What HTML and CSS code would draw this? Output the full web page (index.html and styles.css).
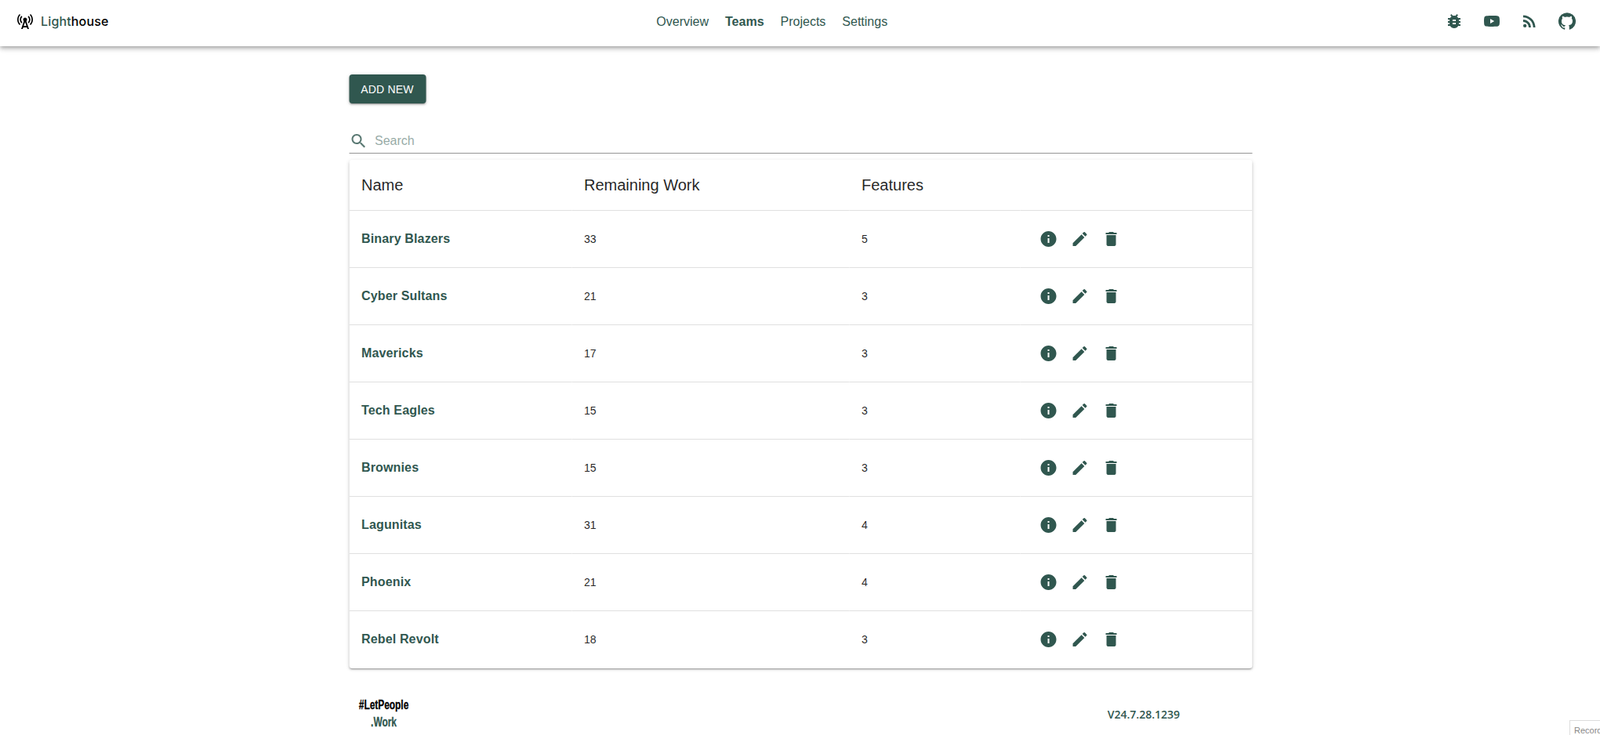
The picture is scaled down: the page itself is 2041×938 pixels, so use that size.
FILE: index.html
```html
<!DOCTYPE html>
<html lang="en">
<head>
    <meta charset="UTF-8">
    <meta name="viewport" content="width=device-width, initial-scale=1.0">
    <title>Lighthouse</title>
    <link rel="stylesheet" href="styles.css">
</head>
<body>
    <svg class="iconDefs" xmlns="http://www.w3.org/2000/svg">
        <symbol id="iconInfo" viewBox="0 0 24 24"><path d="M12 2C6.48 2 2 6.48 2 12s4.48 10 10 10 10-4.48 10-10S17.52 2 12 2m1 15h-2v-6h2zm0-8h-2V7h2z"/></symbol>
        <symbol id="iconEdit" viewBox="0 0 24 24"><path d="M3 17.25V21h3.75L17.81 9.94l-3.75-3.75zM20.71 7.04c.39-.39.39-1.02 0-1.41l-2.34-2.34a.9959.9959 0 0 0-1.41 0l-1.83 1.83 3.75 3.75z"/></symbol>
        <symbol id="iconDelete" viewBox="0 0 24 24"><path d="M6 19c0 1.1.9 2 2 2h8c1.1 0 2-.9 2-2V7H6zM19 4h-3.5l-1-1h-5l-1 1H5v2h14z"/></symbol>
    </svg>

    <header class="topBar">
        <a class="brand">
            <svg class="icon" viewBox="0 0 24 24"><path d="M7.3 14.7l1.2-1.2c-1-1-1.5-2.3-1.5-3.5 0-1.3.5-2.6 1.5-3.5L7.3 5.3c-1.3 1.3-2 3-2 4.7s.7 3.4 2 4.7zM19.1 2.9l-1.2 1.2c1.6 1.6 2.4 3.8 2.4 5.9 0 2.1-.8 4.3-2.4 5.9l1.2 1.2c2-2 2.9-4.5 2.9-7.1 0-2.6-1-5.1-2.9-7.1zM6.1 4.1 4.9 2.9C3 4.9 2 7.4 2 10c0 2.6 1 5.1 2.9 7.1l1.2-1.2c-1.6-1.6-2.4-3.8-2.4-5.9 0-2.1.8-4.3 2.4-5.9zm10.6 10.6c1.3-1.3 2-3 2-4.7-.1-1.7-.7-3.4-2-4.7l-1.2 1.2c1 1 1.5 2.3 1.5 3.5 0 1.3-.5 2.6-1.5 3.5l1.2 1.2zM14.5 10c0-1.38-1.12-2.5-2.5-2.5S9.5 8.62 9.5 10c0 .76.34 1.42.87 1.88L7 22h2l.67-2h4.67l.66 2h2l-3.37-10.12c.53-.46.87-1.12.87-1.88zm-4.17 8L12 13l1.67 5h-3.34z"/></svg>
            <span class="brandName"><span class="brandLight">Light</span>house</span>
        </a>
        <nav class="mainNav">
            <a>Overview</a>
            <a class="active">Teams</a>
            <a>Projects</a>
            <a>Settings</a>
        </nav>
        <div class="topIcons">
            <svg class="icon" viewBox="0 0 24 24"><path d="M20 8h-2.81c-.45-.78-1.07-1.45-1.82-1.96L17 4.41 15.59 3l-2.17 2.17C12.96 5.06 12.49 5 12 5s-.96.06-1.41.17L8.41 3 7 4.41l1.62 1.63C7.88 6.55 7.26 7.22 6.81 8H4v2h2.09c-.05.33-.09.66-.09 1v1H4v2h2v1c0 .34.04.67.09 1H4v2h2.81c1.04 1.79 2.97 3 5.19 3s4.15-1.21 5.19-3H20v-2h-2.09c.05-.33.09-.66.09-1v-1h2v-2h-2v-1c0-.34-.04-.67-.09-1H20zm-6 8h-4v-2h4zm0-4h-4v-2h4z"/></svg>
            <svg class="icon" viewBox="0 0 24 24"><path d="M10 15l5.19-3L10 9v6m11.56-7.83c.13.47.22 1.1.28 1.9.07.8.1 1.49.1 2.09L22 12c0 2.19-.16 3.8-.44 4.83-.25.9-.83 1.48-1.73 1.73-.47.13-1.33.22-2.65.28-1.3.07-2.49.1-3.59.1L12 19c-4.19 0-6.8-.16-7.83-.44-.9-.25-1.48-.83-1.73-1.73-.13-.47-.22-1.1-.28-1.9-.07-.8-.1-1.49-.1-2.09L2 12c0-2.19.16-3.8.44-4.83.25-.9.83-1.48 1.73-1.73.47-.13 1.33-.22 2.65-.28 1.3-.07 2.49-.1 3.59-.1L12 5c4.19 0 6.8.16 7.83.44.9.25 1.48.83 1.73 1.73z"/></svg>
            <svg class="icon" viewBox="0 0 24 24"><circle cx="6.18" cy="17.82" r="2.18"/><path d="M4 4.44v2.83c7.03 0 12.73 5.7 12.73 12.73h2.83c0-8.59-6.97-15.56-15.56-15.56m0 5.66v2.83c3.9 0 7.07 3.17 7.07 7.07h2.83c0-5.47-4.43-9.9-9.9-9.9"/></svg>
            <svg class="icon" viewBox="0 0 24 24"><path d="M12 1.27a11 11 0 00-3.48 21.46c.55.09.73-.28.73-.55v-1.84c-3.03.64-3.67-1.46-3.67-1.46-.55-1.29-1.28-1.65-1.28-1.65-.92-.65.1-.65.1-.65 1.1 0 1.73 1.1 1.73 1.1.92 1.65 2.57 1.2 3.21.92a2 2 0 01.64-1.47c-2.47-.27-5.04-1.19-5.04-5.5 0-1.1.46-2.1 1.2-2.84a3.76 3.76 0 010-2.93s.91-.28 3.11 1.1c1.8-.49 3.7-.49 5.5 0 2.1-1.38 3.02-1.1 3.02-1.1a3.76 3.76 0 010 2.93c.83.74 1.2 1.74 1.2 2.94 0 4.21-2.57 5.13-5.04 5.4.45.37.82.92.82 2.02v3.03c0 .27.1.64.73.55A11 11 0 0012 1.27"/></svg>
        </div>
    </header>

    <main class="mainContainer">
        <button class="addButton">Add New</button>

        <div class="searchBox">
            <svg class="searchIcon" viewBox="0 0 24 24"><path d="M15.5 14h-.79l-.28-.27C15.41 12.59 16 11.11 16 9.5 16 5.91 13.09 3 9.5 3S3 5.91 3 9.5 5.91 16 9.5 16c1.61 0 3.09-.59 4.23-1.57l.27.28v.79l5 4.99L20.49 19zm-6 0C7.01 14 5 11.99 5 9.5S7.01 5 9.5 5 14 7.01 14 9.5 11.99 14 9.5 14"/></svg>
            <input class="searchInput" type="text" placeholder="Search">
        </div>

        <div class="tableCard">
            <table class="teamTable">
                <thead>
                    <tr>
                        <th class="colName">Name</th>
                        <th class="colWork">Remaining Work</th>
                        <th class="colFeatures">Features</th>
                        <th></th>
                    </tr>
                </thead>
                <tbody>
                    <tr>
                        <td class="teamName">Binary Blazers</td><td>33</td><td>5</td>
                        <td class="rowActions"><svg viewBox="0 0 24 24"><use href="#iconInfo"/></svg><svg viewBox="0 0 24 24"><use href="#iconEdit"/></svg><svg viewBox="0 0 24 24"><use href="#iconDelete"/></svg></td>
                    </tr>
                    <tr>
                        <td class="teamName">Cyber Sultans</td><td>21</td><td>3</td>
                        <td class="rowActions"><svg viewBox="0 0 24 24"><use href="#iconInfo"/></svg><svg viewBox="0 0 24 24"><use href="#iconEdit"/></svg><svg viewBox="0 0 24 24"><use href="#iconDelete"/></svg></td>
                    </tr>
                    <tr>
                        <td class="teamName">Mavericks</td><td>17</td><td>3</td>
                        <td class="rowActions"><svg viewBox="0 0 24 24"><use href="#iconInfo"/></svg><svg viewBox="0 0 24 24"><use href="#iconEdit"/></svg><svg viewBox="0 0 24 24"><use href="#iconDelete"/></svg></td>
                    </tr>
                    <tr>
                        <td class="teamName">Tech Eagles</td><td>15</td><td>3</td>
                        <td class="rowActions"><svg viewBox="0 0 24 24"><use href="#iconInfo"/></svg><svg viewBox="0 0 24 24"><use href="#iconEdit"/></svg><svg viewBox="0 0 24 24"><use href="#iconDelete"/></svg></td>
                    </tr>
                    <tr>
                        <td class="teamName">Brownies</td><td>15</td><td>3</td>
                        <td class="rowActions"><svg viewBox="0 0 24 24"><use href="#iconInfo"/></svg><svg viewBox="0 0 24 24"><use href="#iconEdit"/></svg><svg viewBox="0 0 24 24"><use href="#iconDelete"/></svg></td>
                    </tr>
                    <tr>
                        <td class="teamName">Lagunitas</td><td>31</td><td>4</td>
                        <td class="rowActions"><svg viewBox="0 0 24 24"><use href="#iconInfo"/></svg><svg viewBox="0 0 24 24"><use href="#iconEdit"/></svg><svg viewBox="0 0 24 24"><use href="#iconDelete"/></svg></td>
                    </tr>
                    <tr>
                        <td class="teamName">Phoenix</td><td>21</td><td>4</td>
                        <td class="rowActions"><svg viewBox="0 0 24 24"><use href="#iconInfo"/></svg><svg viewBox="0 0 24 24"><use href="#iconEdit"/></svg><svg viewBox="0 0 24 24"><use href="#iconDelete"/></svg></td>
                    </tr>
                    <tr>
                        <td class="teamName">Rebel Revolt</td><td>18</td><td>3</td>
                        <td class="rowActions"><svg viewBox="0 0 24 24"><use href="#iconInfo"/></svg><svg viewBox="0 0 24 24"><use href="#iconEdit"/></svg><svg viewBox="0 0 24 24"><use href="#iconDelete"/></svg></td>
                    </tr>
                </tbody>
            </table>
        </div>

        <footer class="pageFooter">
            <div class="footerLogo">
                <p class="logoTop">#LetPeople</p>
                <p class="logoBottom">.Work</p>
            </div>
            <p class="versionText">V24.7.28.1239</p>
        </footer>
    </main>

    <div class="recorderBadge">Recorder</div>
</body>
</html>
```

FILE: styles.css
```css
html, body {
    height: 100%;
    overflow: hidden;
}

body {
    padding: 0;
    margin: 0;
    background-color: #fff;
    color: #30574F;
    font-family: 'Liberation Sans', Arial, sans-serif;
}

p {
    margin: 0;
}

.iconDefs {
    display: none;
}

.icon {
    width: 24px;
    height: 24px;
    fill: currentColor;
    display: block;
}

.topBar {
    display: flex;
    justify-content: space-between;
    align-items: center;
    box-sizing: border-box;
    height: 59px;
    padding: 0 18px 5px 20px;
    background-color: #fff;
    box-shadow: 0 2px 4px -1px rgba(0,0,0,0.2), 0 4px 5px 0 rgba(0,0,0,0.14), 0 1px 10px 0 rgba(0,0,0,0.12);
}

.brand {
    display: flex;
    align-items: center;
    gap: 8px;
    color: #000;
}

.brandName {
    font-family: Inter, sans-serif;
    font-size: 16px;
    font-weight: 500;
    letter-spacing: .15px;
}

.brandLight {
    color: #30574F;
}

.mainNav {
    display: flex;
    gap: 21px;
    padding-top: 1px;
    font-size: 16px;
}

.active {
    font-weight: bold;
}

.topIcons {
    display: flex;
    gap: 24px;
    padding: 0 12px;
}

.mainContainer {
    width: 1152px;
    margin-left: auto;
    margin-right: auto;
    padding-top: 36px;
    transform: translateX(.5px);
}

.addButton {
    display: block;
    height: 37px;
    width: 98px;
    padding: 0;
    border: 0;
    border-radius: 4px;
    background-color: #30574F;
    color: #fff;
    font-family: inherit;
    font-size: 14px;
    text-transform: uppercase;
    letter-spacing: .2px;
    box-shadow: 0 3px 1px -2px rgba(0,0,0,0.2), 0 2px 2px 0 rgba(0,0,0,0.14), 0 1px 5px 0 rgba(0,0,0,0.12);
}

.searchBox {
    display: flex;
    align-items: center;
    gap: 9px;
    box-sizing: border-box;
    height: 32px;
    margin-top: 32px;
    border-bottom: 1px solid #949494;
}

.searchIcon {
    width: 24px;
    height: 24px;
    fill: #30574F;
    opacity: .8;
}

.searchInput {
    flex: 1;
    border: 0;
    outline: 0;
    padding: 0;
    font-family: inherit;
    font-size: 16px;
    color: #30574F;
}

.searchInput::placeholder {
    color: #30574F;
    opacity: .5;
}

.tableCard {
    margin-top: 8px;
    border-radius: 4px;
    box-shadow: 0 3px 1px -2px rgba(0,0,0,0.2), 0 2px 2px 0 rgba(0,0,0,0.14), 0 1px 5px 0 rgba(0,0,0,0.12);
}

.teamTable {
    width: 100%;
    border-collapse: separate;
    border-spacing: 0;
    table-layout: fixed;
}

.teamTable th {
    height: 65px;
    padding: 1px 16px 0;
    box-sizing: border-box;
    text-align: left;
    font-size: 20px;
    font-weight: normal;
    color: rgba(0,0,0,0.87);
    border-bottom: 1px solid #e0e0e0;
}

.colName {
    width: 284px;
}

.colWork {
    width: 354px;
}

.colFeatures {
    width: 218px;
}

.teamTable td {
    height: 73px;
    padding: 0 16px;
    box-sizing: border-box;
    font-size: 14px;
    color: rgba(0,0,0,0.87);
    border-bottom: 1px solid #e0e0e0;
}

.teamTable tr:last-child td {
    border-bottom-color: transparent;
}

.teamTable .teamName {
    font-size: 16px;
    font-weight: bold;
    letter-spacing: .15px;
    color: #30574F;
}

.rowActions svg {
    width: 24px;
    height: 24px;
    padding: 0 8px;
    fill: #30574F;
    vertical-align: middle;
}

.pageFooter {
    display: flex;
    justify-content: space-between;
    align-items: center;
    margin-top: 36px;
    padding: 0 92px 0 11px;
}

/* no condensed font here, so squeeze the bold sans */
.footerLogo {
    display: flex;
    flex-direction: column;
    align-items: center;
    width: 66px;
    font-size: 17px;
    font-weight: bold;
    line-height: 22px;
    -webkit-text-stroke: .3px currentColor;
    white-space: nowrap;
    transform: scaleX(.7);
}

.logoTop {
    color: #000;
}

.versionText {
    font-family: 'Open Sans', sans-serif;
    font-size: 14px;
    font-weight: 600;
}

.recorderBadge {
    position: fixed;
    top: 919px;
    left: 2002px;
    width: 60px;
    height: 30px;
    box-sizing: border-box;
    padding: 6px 0 0 5px;
    background-color: #fff;
    border: 1px solid #ddd;
    font-size: 11px;
    color: #888;
}
```
